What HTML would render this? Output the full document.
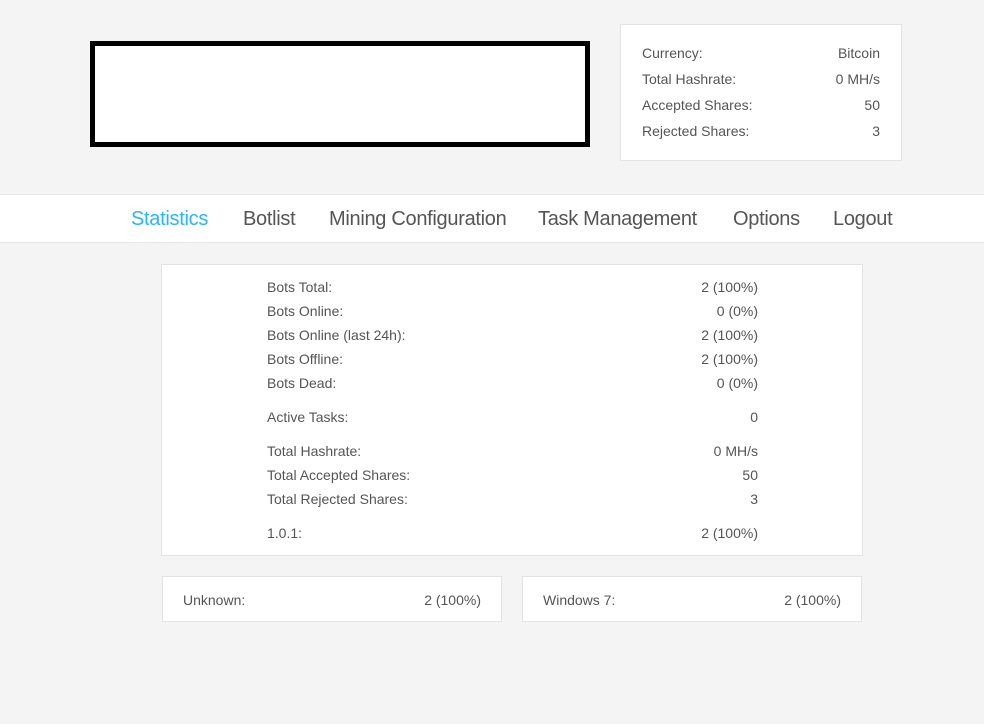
<!DOCTYPE html>
<html><head><style>
body{margin:0;width:984px;height:724px;background:#f4f4f4;font-family:"Liberation Sans",sans-serif;color:#555;position:relative;overflow:hidden;font-size:14px}
.a{position:absolute}
.box{position:absolute;background:#fff;border:1px solid #e3e3e3;box-sizing:border-box}
.r{position:absolute;left:0;right:0;height:20px;line-height:20px}
.r span:last-child{position:absolute;right:0}
.nav a{position:absolute;top:0;line-height:49px;font-size:20px;color:#555;letter-spacing:-0.3px}
</style></head><body>
<div class="a" style="left:90px;top:41px;width:500px;height:106px;border:5px solid #000;box-sizing:border-box;background:#fff"></div>
<div class="box" style="left:620px;top:24px;width:282px;height:137px">
 <div class="a" style="left:21px;right:21px;top:0;height:100%">
  <div class="r" style="top:18px"><span>Currency:</span><span>Bitcoin</span></div>
  <div class="r" style="top:44px"><span>Total Hashrate:</span><span>0 MH/s</span></div>
  <div class="r" style="top:70px"><span>Accepted Shares:</span><span>50</span></div>
  <div class="r" style="top:96px"><span>Rejected Shares:</span><span>3</span></div>
 </div>
</div>
<div class="a nav" style="left:0;right:0;top:194px;height:49px;background:#fff;border-top:1px solid #e6e6e6;border-bottom:1px solid #e6e6e6;box-sizing:border-box">
 <a style="left:131px;color:#29b6f6">Statistics</a>
 <a style="left:243px">Botlist</a>
 <a style="left:329px">Mining Configuration</a>
 <a style="left:538px">Task Management</a>
 <a style="left:733px">Options</a>
 <a style="left:833px">Logout</a>
</div>
<div class="box" style="left:161px;top:264px;width:702px;height:292px">
 <div class="a" style="left:105px;width:491px;top:0;height:100%">
  <div class="r" style="top:12px"><span>Bots Total:</span><span>2 (100%)</span></div>
  <div class="r" style="top:36px"><span>Bots Online:</span><span>0 (0%)</span></div>
  <div class="r" style="top:60px"><span>Bots Online (last 24h):</span><span>2 (100%)</span></div>
  <div class="r" style="top:84px"><span>Bots Offline:</span><span>2 (100%)</span></div>
  <div class="r" style="top:108px"><span>Bots Dead:</span><span>0 (0%)</span></div>
  <div class="r" style="top:142px"><span>Active Tasks:</span><span>0</span></div>
  <div class="r" style="top:176px"><span>Total Hashrate:</span><span>0 MH/s</span></div>
  <div class="r" style="top:200px"><span>Total Accepted Shares:</span><span>50</span></div>
  <div class="r" style="top:224px"><span>Total Rejected Shares:</span><span>3</span></div>
  <div class="r" style="top:258px"><span>1.0.1:</span><span>2 (100%)</span></div>
 </div>
</div>
<div class="box" style="left:162px;top:576px;width:340px;height:46px">
 <div class="a" style="left:20px;right:20px;top:0;height:100%"><div class="r" style="top:13px"><span>Unknown:</span><span>2 (100%)</span></div></div>
</div>
<div class="box" style="left:522px;top:576px;width:340px;height:46px">
 <div class="a" style="left:20px;right:20px;top:0;height:100%"><div class="r" style="top:13px"><span>Windows 7:</span><span>2 (100%)</span></div></div>
</div>
</body></html>
